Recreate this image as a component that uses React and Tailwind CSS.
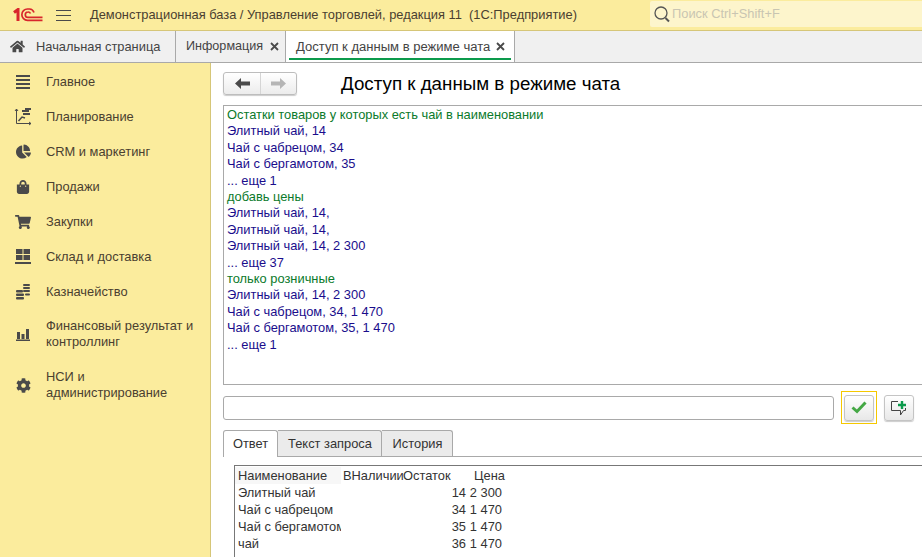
import React from 'react';
import { FaChartPie, FaCog, FaHome, FaShoppingBag, FaShoppingCart } from 'react-icons/fa';

const Logo = () => (
  <svg width="30" height="14" viewBox="0 0 30 14" fill="none" stroke="#d8262c">
    <path d="M1 4.5 L5 1.5 V13" strokeWidth="3" />
    <path d="M21 4.5 A5 5 0 0 0 16.5 1 H14.5 A5.5 5.5 0 0 0 14.5 12.3 H29.5" strokeWidth="1.7" />
    <path d="M17.5 5.5 A2.6 2.6 0 0 0 15 4 A2.7 2.7 0 0 0 15 9.4 H29.5" strokeWidth="1.7" />
  </svg>
);

const ListIcon = () => (
  <svg width="16" height="14" viewBox="0 0 16 14" fill="#4a4a4a">
    <rect x="1" y="0" width="14" height="2" />
    <rect x="1" y="4" width="14" height="2" />
    <rect x="1" y="8" width="14" height="2" />
    <rect x="1" y="12" width="14" height="2" />
  </svg>
);

const PlanIcon = () => (
  <svg width="18" height="18" viewBox="0 0 18 18" fill="none" stroke="#4a4a4a">
    <path d="M2.5 1 V15.5 H17" />
    <path d="M1 3 L2.5 1 L4 3 M15 14 L17 15.5 L15 17" />
    <path d="M4.5 13 L8 9 L11 10" strokeWidth="1.5" />
    <rect x="8" y="2" width="7" height="2" fill="#4a4a4a" stroke="none" />
    <rect x="11" y="0" width="6" height="2" fill="#4a4a4a" stroke="none" />
    <rect x="9" y="5" width="7" height="2" fill="#4a4a4a" stroke="none" />
  </svg>
);

const StockIcon = () => (
  <svg width="16" height="16" viewBox="0 0 16 16" fill="#4a4a4a">
    <rect x="1" y="0" width="6.5" height="5" />
    <rect x="8.5" y="0" width="6.5" height="5" />
    <rect x="1" y="6" width="6.5" height="5" />
    <rect x="8.5" y="6" width="6.5" height="5" />
    <rect x="0" y="13" width="16" height="2" />
  </svg>
);

const CoinsIcon = () => (
  <svg width="15" height="16" viewBox="0 0 15 16" fill="#4a4a4a">
    <rect x="7" y="0" width="7" height="2" rx="1" />
    <rect x="7" y="3" width="7" height="2" rx="1" />
    <rect x="7" y="6" width="7" height="2" rx="1" />
    <rect x="0" y="6" width="7" height="2.5" rx="1" />
    <rect x="0" y="9.5" width="8" height="2.5" rx="1" />
    <rect x="0" y="13" width="8" height="2.5" rx="1" />
    <rect x="9" y="9.5" width="5" height="2" rx="1" />
  </svg>
);

const BarsIcon = () => (
  <svg width="14" height="13" viewBox="0 0 14 13" fill="#4a4a4a">
    <rect x="1" y="4" width="3" height="7" />
    <rect x="5.5" y="6" width="3" height="5" />
    <rect x="10" y="1" width="3" height="10" />
    <rect x="0" y="11.5" width="14" height="1.5" />
  </svg>
);

const menu = [
  { label: 'Главное', icon: <ListIcon />, h: 'h-[35px]' },
  { label: 'Планирование', icon: <PlanIcon />, h: 'h-[35px]' },
  { label: 'CRM и маркетинг', icon: <FaChartPie size={15} color="#4a4a4a" />, h: 'h-[35px]' },
  { label: 'Продажи', icon: <FaShoppingBag size={14} color="#4a4a4a" />, h: 'h-[35px]' },
  { label: 'Закупки', icon: <FaShoppingCart size={16} color="#4a4a4a" />, h: 'h-[35px]' },
  { label: 'Склад и доставка', icon: <StockIcon />, h: 'h-[35px]' },
  { label: 'Казначейство', icon: <CoinsIcon />, h: 'h-[35px]' },
  { label: 'Финансовый результат и\nконтроллинг', icon: <BarsIcon />, h: 'h-[50px]' },
  { label: 'НСИ и\nадминистрирование', icon: <FaCog size={15} color="#4a4a4a" />, h: 'h-[52px]' },
];

const chat = [
  ['g', 'Остатки товаров у которых есть чай в наименовании'],
  ['b', 'Элитный чай, 14'],
  ['b', 'Чай с чабрецом, 34'],
  ['b', 'Чай с бергамотом, 35'],
  ['b', '... еще 1'],
  ['g', 'добавь цены'],
  ['b', 'Элитный чай, 14,'],
  ['b', 'Элитный чай, 14,'],
  ['b', 'Элитный чай, 14, 2 300'],
  ['b', '... еще 37'],
  ['g', 'только розничные'],
  ['b', 'Элитный чай, 14, 2 300'],
  ['b', 'Чай с чабрецом, 34, 1 470'],
  ['b', 'Чай с бергамотом, 35, 1 470'],
  ['b', '... еще 1'],
];

const rows = [
  ['Элитный чай', '14', '2 300'],
  ['Чай с чабрецом', '34', '1 470'],
  ['Чай с бергамотом', '35', '1 470'],
  ['чай', '36', '1 470'],
];

const CloseMark = () => (
  <svg width="9" height="9" viewBox="0 0 9 9" stroke="#4a4a4a" strokeWidth="1.8">
    <path d="M1 1 L8 8 M8 1 L1 8" />
  </svg>
);

export default function App() {
  return (
    <div className="w-[922px] h-[557px] overflow-hidden flex flex-col bg-white text-[12.87px] text-[#333] font-['Liberation_Sans',Arial,sans-serif]">
      {/* Header */}
      <div className="h-[31px] shrink-0 flex items-center bg-[#fbec9d] border-b border-[#d6c678]">
        <div className="ml-[13px] w-[30px] flex"><Logo /></div>
        <div className="ml-[13px] w-[15px] flex flex-col gap-[4px]">
          <div className="h-px bg-[#4a4a4a]" />
          <div className="h-px bg-[#4a4a4a]" />
          <div className="h-px bg-[#4a4a4a]" />
        </div>
        <div className="ml-[19px] w-[560px] whitespace-pre text-[#4a4030]">
          Демонстрационная база / Управление торговлей, редакция 11  (1С:Предприятие)
        </div>
        <div className="h-[26px] flex-1 flex items-center bg-[#fdf5cc] rounded-l-[2px] mb-[2px]">
          <svg className="ml-[3px]" width="18" height="19" viewBox="0 0 18 19" fill="none" stroke="#555">
            <circle cx="8" cy="8" r="6" strokeWidth="1.3" />
            <path d="M12.5 13 L16 16.5" strokeWidth="2" />
          </svg>
          <span className="ml-[1px] text-[#c9c5b2]">Поиск Ctrl+Shift+F</span>
        </div>
      </div>

      {/* Tabs */}
      <div className="h-[32px] shrink-0 flex bg-[#f0f0f0] border-b border-[#a9a9a9] text-[#444] whitespace-nowrap">
        <div className="w-[176px] flex items-center border-r border-[#a9a9a9]">
          <FaHome className="ml-[10px]" size={15} color="#4a4a4a" />
          <span className="ml-[11px]">Начальная страница</span>
        </div>
        <div className="w-[110px] flex items-center border-r border-[#a9a9a9]">
          <span className="ml-[10px] text-[12.6px]">Информация</span>
          <span className="ml-[7px] flex"><CloseMark /></span>
        </div>
        <div className="relative w-[229px] flex items-center bg-white border-r border-[#a9a9a9]">
          <span className="ml-[10px] text-[13.05px]">Доступ к данным в режиме чата</span>
          <span className="ml-[6px] flex"><CloseMark /></span>
          <div className="absolute left-[3px] right-[3px] bottom-[2px] h-[2px] bg-[#0c9a4c]" />
        </div>
      </div>

      <div className="flex-1 flex min-h-0">
        {/* Sidebar */}
        <div className="w-[211px] shrink-0 pt-px bg-[#fbec9d] border-r border-[#d6c678] text-[#4a4030]">
          {menu.map((item) => (
            <div key={item.label} className={`${item.h} flex items-center`}>
              <div className="w-[46px] shrink-0 flex justify-center pl-[2px] pr-[2px]">{item.icon}</div>
              <div className="w-[160px] leading-[16px] whitespace-pre-line">{item.label}</div>
            </div>
          ))}
        </div>

        {/* Main */}
        <div className="flex-1 min-w-0 overflow-hidden pl-[12px]">
          <div className="h-[42px] flex items-start pt-[9px]">
            <div className="w-[74px] h-[23px] flex rounded-[3px] border border-[#bdbdbd] bg-gradient-to-b from-white to-[#ececec] shadow-[0_1px_1px_#ccc]">
              <div className="w-[37px] flex items-center justify-center border-r border-[#d5d5d5]">
                <svg width="15" height="11" viewBox="0 0 15 11" fill="#4a4a4a"><path d="M0 5.5 L6 0 V3.5 H15 V7.5 H6 V11 Z" /></svg>
              </div>
              <div className="flex-1 flex items-center justify-center">
                <svg width="15" height="11" viewBox="0 0 15 11" fill="#b5b5b5"><path d="M15 5.5 L9 0 V3.5 H0 V7.5 H9 V11 Z" /></svg>
              </div>
            </div>
            <div className="ml-[44px] text-[18.75px] leading-[23px] text-black whitespace-nowrap">Доступ к данным в режиме чата</div>
          </div>

          <div className="w-[720px] h-[280px] border border-[#a9a9a9] pl-[3px] pt-[1px] leading-[16.4px]">
            {chat.map((line, i) => (
              <div key={i} className={line[0] === 'g' ? 'text-[#0b7a2b]' : 'text-[#1a0d8c]'}>{line[1]}</div>
            ))}
          </div>

          <div className="mt-[6px] h-[33px] flex items-center">
            <div className="w-[611px] h-[24px] border border-[#a9a9a9] rounded-[3px] bg-white" />
            <div className="ml-[7px] w-[36px] h-[33px] flex items-center justify-center border border-[#f5c800]">
              <div className="w-[30px] h-[26px] flex items-center justify-center rounded-[3px] border border-[#c4c4c4] bg-gradient-to-b from-white to-[#e8e8e8] shadow-[0_1px_1px_#ccc]">
                <svg width="16" height="13" viewBox="0 0 16 13" fill="none" stroke="#45a845" strokeWidth="3"><path d="M1.5 6.5 L6 10.5 L14.5 1.5" /></svg>
              </div>
            </div>
            <div className="ml-[7px] w-[30px] h-[26px] flex items-center justify-center rounded-[3px] border border-[#c4c4c4] bg-gradient-to-b from-white to-[#e8e8e8] shadow-[0_1px_1px_#ccc]">
              <svg width="18" height="16" viewBox="0 0 18 16" fill="none">
                <path d="M8 1.5 H1.5 V10.5 H10.5 V15 L13.5 10.5 H15.5 V8" stroke="#444" />
                <path d="M12 1 V9 M8 5 H16" stroke="#0c9a4c" strokeWidth="2.4" />
              </svg>
            </div>
          </div>

          <div className="mt-[6px] h-[27px] flex items-end border-b border-[#a9a9a9] relative">
            <div className="w-[55px] h-[27px] mb-[-1px] flex items-center justify-center bg-white border border-b-0 border-[#a9a9a9] rounded-t-[3px]">Ответ</div>
            <div className="w-[104px] h-[26px] pl-px flex items-center justify-center bg-[#ebebeb] border-t border-r border-[#a9a9a9] rounded-tr-[3px]">Текст запроса</div>
            <div className="w-[71px] h-[26px] pl-px flex items-center justify-center bg-[#ebebeb] border-t border-r border-[#a9a9a9] rounded-tr-[3px]">История</div>
          </div>

          <div className="mt-[8px] ml-[11px] w-[720px] h-[120px] border-l border-t border-[#777] pt-px">
            <div className="grid grid-cols-[106px_62px_64px_38px] auto-rows-[17px] leading-[17px] text-[#333] whitespace-nowrap">
              <div className="pl-[3px] bg-[#f7f7f7]">Наименование</div>
              <div className="pl-[2px]">ВНаличии</div>
              <div>Остаток</div>
              <div className="text-right">Цена</div>
              {rows.map((r) => (
                <React.Fragment key={r[0]}>
                  <div className="pl-[3px] overflow-hidden">{r[0]}</div>
                  <div />
                  <div className="text-right pr-[1px]">{r[1]}</div>
                  <div className="text-right pr-[3px]">{r[2]}</div>
                </React.Fragment>
              ))}
            </div>
          </div>
        </div>
      </div>
    </div>
  );
}
